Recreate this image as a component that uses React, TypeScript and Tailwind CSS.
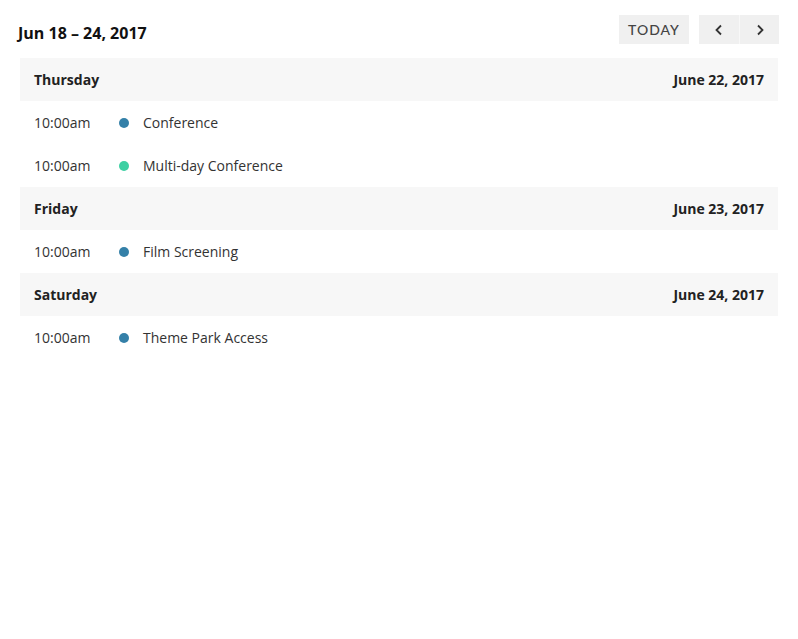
const days = [
  {
    name: "Thursday",
    date: "June 22, 2017",
    events: [
      { time: "10:00am", title: "Conference", color: "bg-[#3480a8]" },
      { time: "10:00am", title: "Multi-day Conference", color: "bg-[#3dd0a3]" },
    ],
  },
  {
    name: "Friday",
    date: "June 23, 2017",
    events: [{ time: "10:00am", title: "Film Screening", color: "bg-[#3480a8]" }],
  },
  {
    name: "Saturday",
    date: "June 24, 2017",
    events: [{ time: "10:00am", title: "Theme Park Access", color: "bg-[#3480a8]" }],
  },
];

export default function App() {
  return (
    <div className="min-h-[639px] w-[798px] bg-white font-['Open_Sans',sans-serif] text-[#333]">
      <div className="pl-[18px] pr-[19px] pt-[15px]">
        {/* Toolbar */}
        <div className="flex items-start justify-between">
          <h2 className="mt-[8px] text-[16px] font-bold leading-[20px] text-[#111]">
            Jun 18 – 24, 2017
          </h2>
          <div className="flex gap-[10px]">
            <button className="h-[29px] w-[70px] bg-[#f0f0f0] font-['Lato',sans-serif] text-[14px] font-medium tracking-[1px] text-[#444]">
              TODAY
            </button>
            <div className="flex">
              <button className="flex h-[29px] w-[40px] items-center justify-center bg-[#f0f0f0]">
                <svg width="10" height="12" viewBox="0 0 10 12">
                  <path d="M7 1.5 2.5 6 7 10.5" fill="none" stroke="#333" strokeWidth="1.8" />
                </svg>
              </button>
              <button className="flex h-[29px] w-[40px] items-center justify-center border-l border-[#f8f8f8] bg-[#f0f0f0]">
                <svg width="10" height="12" viewBox="0 0 10 12">
                  <path d="M3 1.5 7.5 6 3 10.5" fill="none" stroke="#333" strokeWidth="1.8" />
                </svg>
              </button>
            </div>
          </div>
        </div>

        {/* List */}
        <div className="ml-[2px] mr-[1px] mt-[14px]">
          {days.map((day) => (
            <div key={day.name}>
              <div className="flex h-[43px] items-center justify-between bg-[#f7f7f7] px-[14px] text-[14px] font-bold text-[#222]">
                <span>{day.name}</span>
                <span>{day.date}</span>
              </div>
              {day.events.map((ev) => (
                <div key={ev.title} className="flex h-[43px] items-center px-[14px] text-[14px]">
                  <span className="w-[85px]">{ev.time}</span>
                  <span className={`h-[10px] w-[10px] rounded-full ${ev.color}`} />
                  <span className="ml-[14px]">{ev.title}</span>
                </div>
              ))}
            </div>
          ))}
        </div>
      </div>
    </div>
  );
}
